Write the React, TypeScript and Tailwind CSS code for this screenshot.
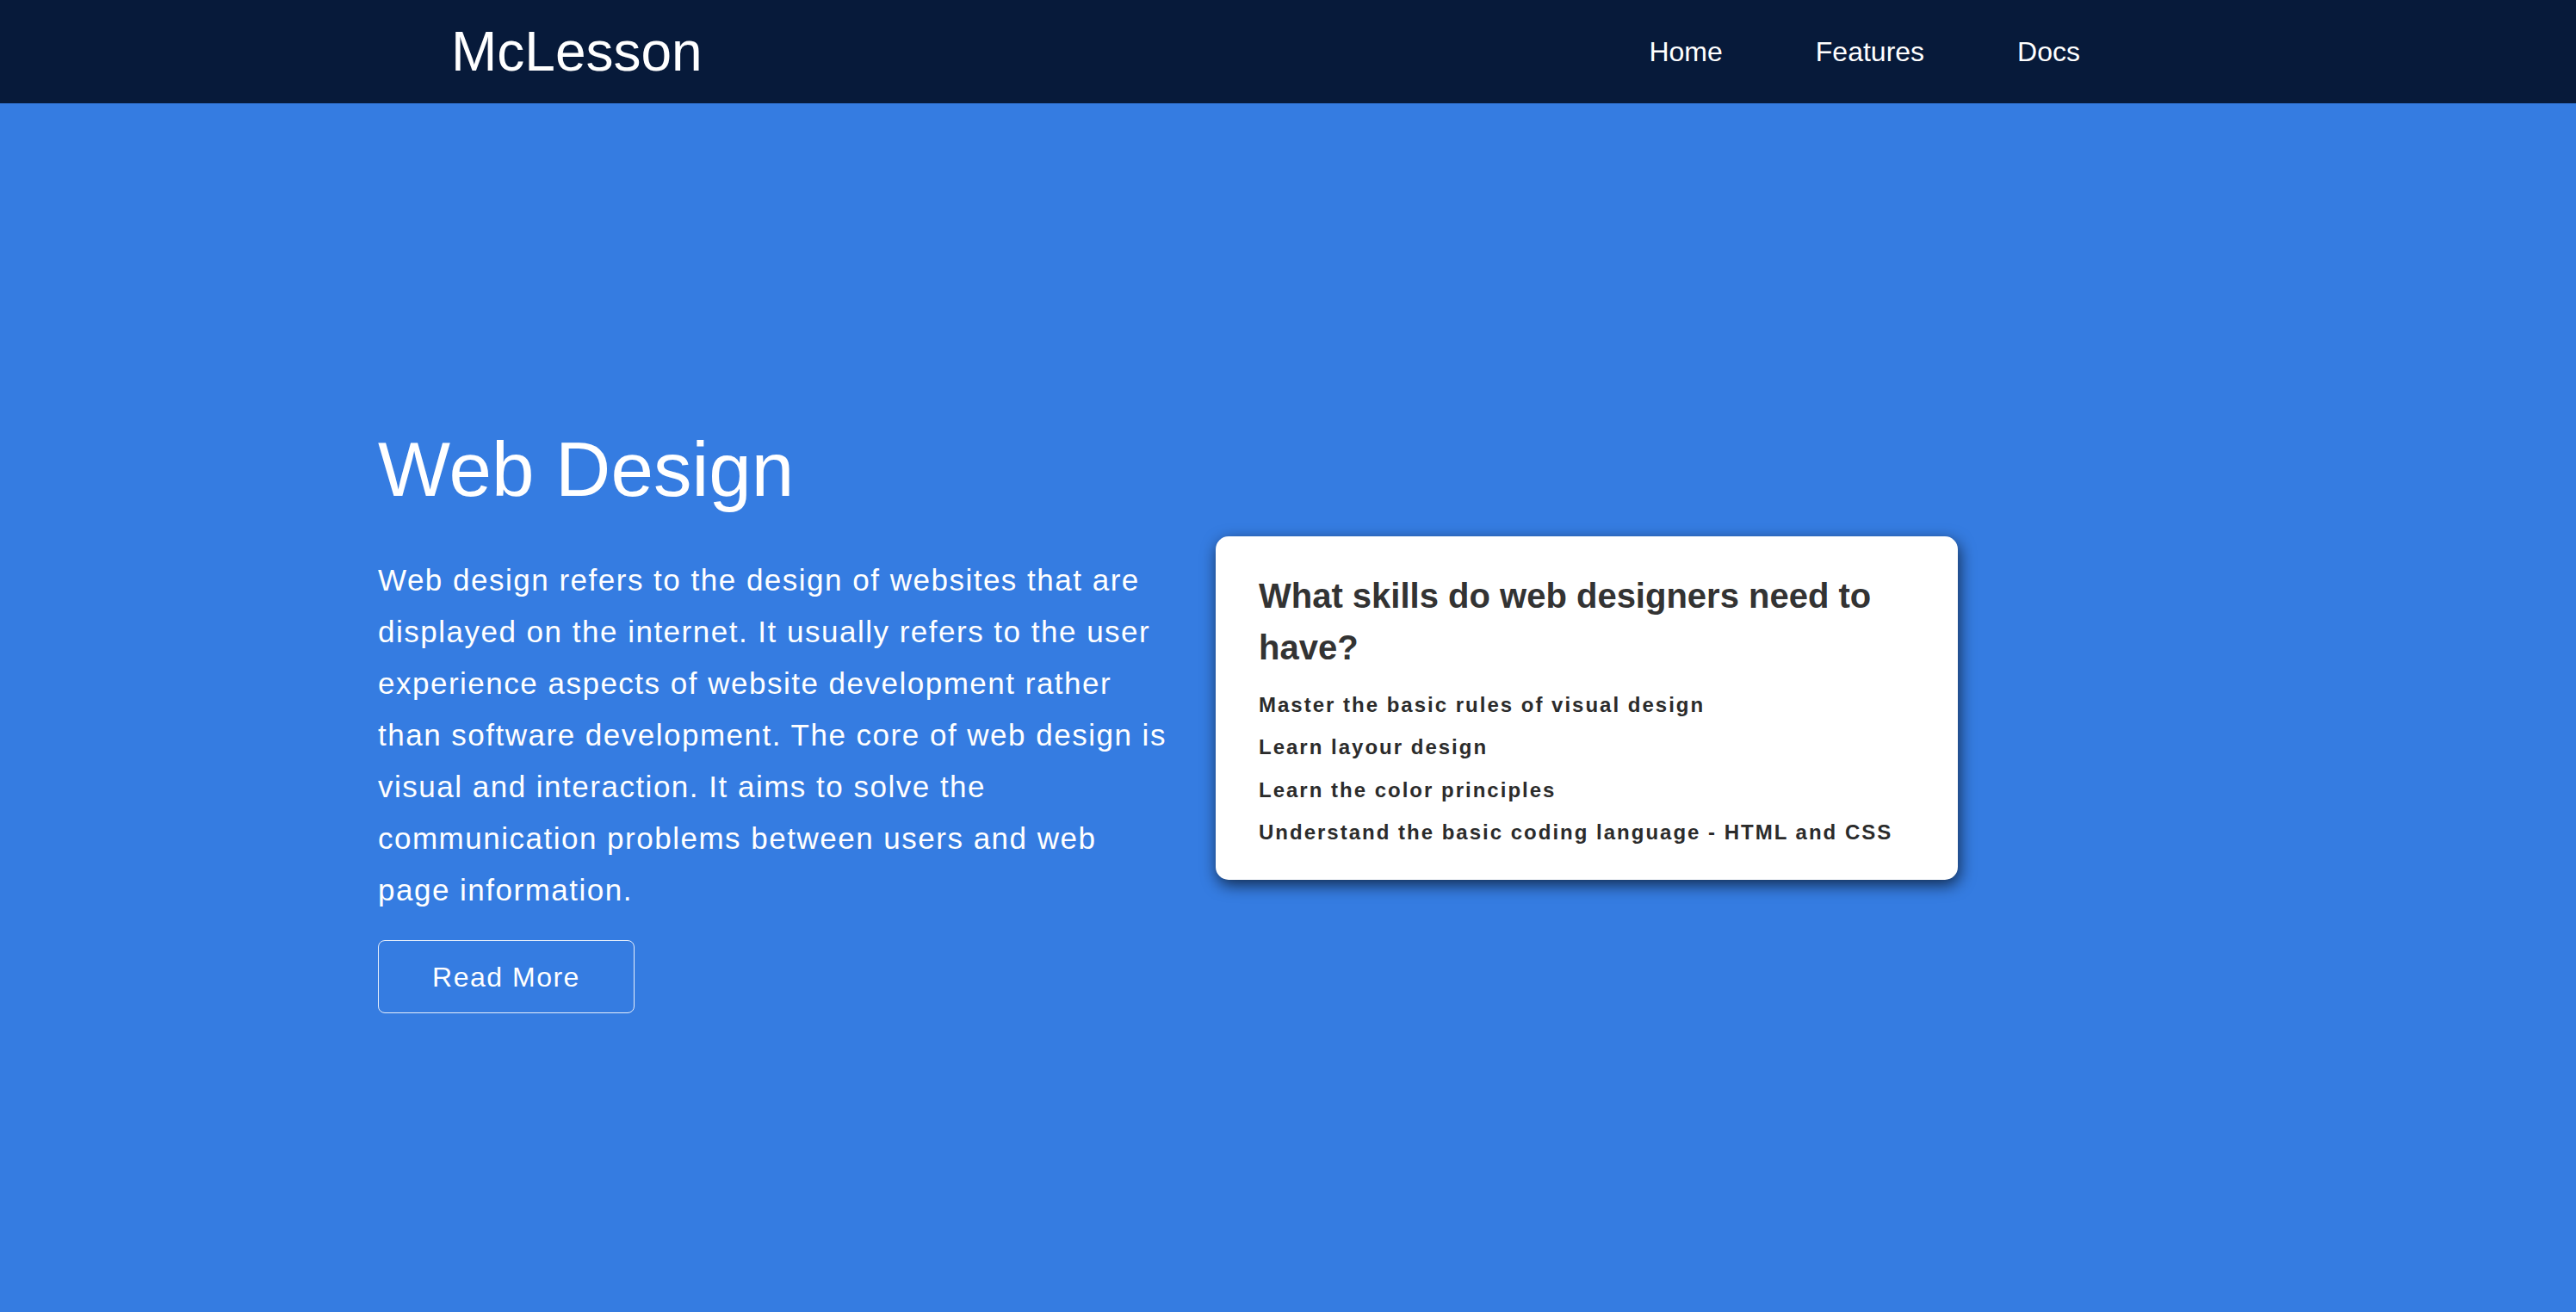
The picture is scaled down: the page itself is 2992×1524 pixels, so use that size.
export default function App() {
  const skills = [
    "Master the basic rules of visual design",
    "Learn layour design",
    "Learn the color principles",
    "Understand the basic coding language - HTML and CSS",
  ];

  return (
    <div className="min-h-screen bg-[#357ce1] font-['Liberation_Sans',Arial,sans-serif]">
      {/* top bar */}
      <header className="h-[120px] bg-[#071a3a]">
        <div className="mx-auto flex h-full w-[1944px] items-center justify-between">
          <a href="#" className="text-[64px] leading-none text-white">
            McLesson
          </a>
          <nav className="flex">
            <a href="#" className="px-[54px] text-[32px] text-white">Home</a>
            <a href="#" className="px-[54px] text-[32px] text-white">Features</a>
            <a href="#" className="pl-[54px] pr-[52px] text-[32px] text-white">Docs</a>
          </nav>
        </div>
      </header>

      {/* hero */}
      <section className="flex h-[calc(100vh-120px)] items-center">
        <div className="mx-auto flex w-[2114px] items-center gap-[52px]">
          <div className="mt-[34px] w-[921px] shrink-0 text-white">
            <h1 className="text-[89px] leading-none">Web Design</h1>
            <p className="mt-[54px] text-[35px] leading-[60px] tracking-[1.5px]">
              Web design refers to the design of websites that are displayed
              on the internet. It usually refers to the user experience aspects
              of website development rather than software development. The core
              of web design is visual and interaction. It aims to solve the
              communication problems between users and web page information.
            </p>
            <button className="mt-[28px] flex h-[85px] w-[298px] items-center justify-center rounded-[8px] border-[1.5px] border-[#e6eefb] text-[32px] tracking-[1.5px] text-white">
              Read More
            </button>
          </div>

          <div className="w-[862px] shrink-0 rounded-[15px] bg-white px-[50px] pt-[39px] pb-[30px] text-[#333] shadow-[2px_6px_18px_rgba(0,0,0,0.65)]">
            <h3 className="text-[40px] font-bold leading-[60px]">
              What skills do web designers need to have?
            </h3>
            <ul className="mt-[12px]">
              {skills.map((s) => (
                <li key={s} className="text-[24px] font-bold leading-[49.5px] tracking-[2px] text-[#2b2b2b]">
                  {s}
                </li>
              ))}
            </ul>
          </div>
        </div>
      </section>
    </div>
  );
}
